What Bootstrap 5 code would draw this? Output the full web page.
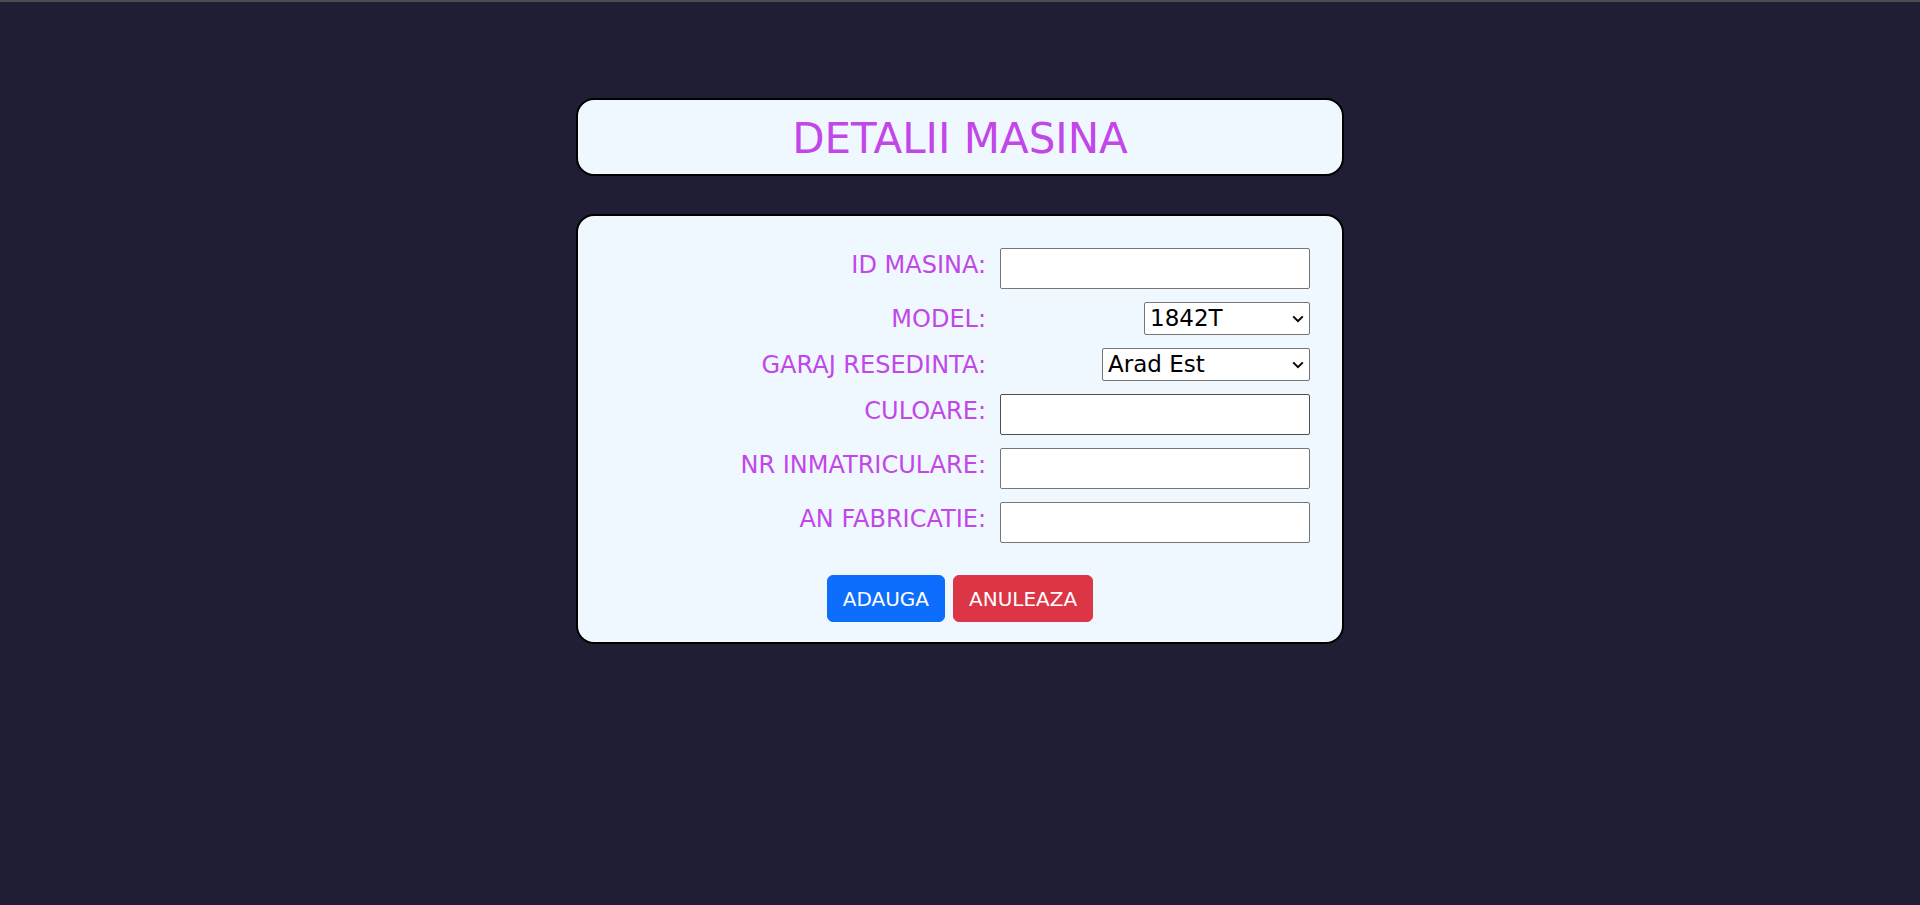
<!DOCTYPE html>
<html lang="ro">
<head>
<meta charset="utf-8">
<meta name="viewport" content="width=device-width, initial-scale=1">
<title>Detalii masina</title>
<link rel="stylesheet" href="https://cdn.jsdelivr.net/npm/bootstrap@5.3.0/dist/css/bootstrap.min.css">
<style>
body {
  background: #201e34;
  border-top: 2px solid #4d4d4f;
  color: #c147e9;
  font-family: Verdana, "DejaVu Sans", sans-serif;
  font-size: 24px;
  padding-top: 96px;
}
.page-column { width: 40%; min-width: 640px; }
.panel {
  background: #f0f8ff;
  border: 2px solid #000;
  border-radius: 18px;
}
.page-title { font-size: 42px; line-height: 60px; padding: 9px 0 5px; margin-bottom: 38px; }
.car-form { padding: 32px 32px 20px; }
.fields { gap: 13px; margin-bottom: 32px; }
.field-row { display: grid; grid-template-columns: 1fr 310px; column-gap: 14px; align-items: start; }
.field-row label { line-height: 34px; height: 33px; text-align: right; }
.field-row input, .field-row select {
  background-color: #fff;
  border: 1px solid #767676;
  border-radius: 2px;
  color: #000;
  justify-self: end;
}
.field-row input { width: 100%; height: 41px; padding: 0 4px; }
.field-row input.active-field { border-color: #4f4f4f; }
.field-row select {
  appearance: none;
  height: 33px;
  padding: 0 20px 0 5px;
  font-size: 23px;
  line-height: 31px;
  background-image: url("data:image/svg+xml,%3Csvg xmlns='http://www.w3.org/2000/svg' viewBox='0 0 12 8'%3E%3Cpath d='M1.2 1.4 6 6.1l4.8-4.7' fill='none' stroke='%23000' stroke-width='2'/%3E%3C/svg%3E");
  background-repeat: no-repeat;
  background-position: right 5px center;
  background-size: 12px 8px;
}
.select-model { width: 166px; }
.select-garage { width: 208px; }
.actions .btn { font-size: 20px; line-height: 31px; padding: 8px 15px 6px; }
</style>
</head>
<body>
<main class="page-column mx-auto">
  <h1 class="panel page-title text-center fw-normal">DETALII MASINA</h1>
  <form class="panel car-form">
    <div class="fields d-flex flex-column">
      <div class="field-row"><label for="id">ID MASINA:</label><input id="id" type="text"></div>
      <div class="field-row"><label for="model">MODEL:</label><select id="model" class="select-model"><option>1842T</option></select></div>
      <div class="field-row"><label for="garaj">GARAJ RESEDINTA:</label><select id="garaj" class="select-garage"><option>Arad Est</option></select></div>
      <div class="field-row"><label for="culoare">CULOARE:</label><input id="culoare" class="active-field" type="text"></div>
      <div class="field-row"><label for="nr">NR INMATRICULARE:</label><input id="nr" type="text"></div>
      <div class="field-row"><label for="an">AN FABRICATIE:</label><input id="an" type="text"></div>
    </div>
    <div class="actions d-flex justify-content-center gap-2">
      <button type="submit" class="btn btn-primary">ADAUGA</button>
      <button type="button" class="btn btn-danger">ANULEAZA</button>
    </div>
  </form>
</main>
<script src="https://cdn.jsdelivr.net/npm/bootstrap@5.3.0/dist/js/bootstrap.bundle.min.js"></script>
</body>
</html>
